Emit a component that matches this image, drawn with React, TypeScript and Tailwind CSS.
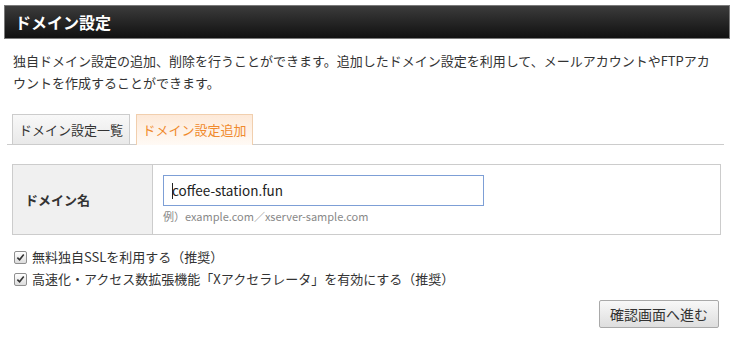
import React from 'react';

const FONT = { fontFamily: '"Noto Sans CJK JP", "Liberation Sans", sans-serif' };

const CheckMark: React.FC = () => (
  <span className="flex h-[13px] w-[13px] items-center justify-center rounded-[2px] border border-[#8f8f8f] bg-gradient-to-b from-white to-[#dcdcdc]">
    <svg viewBox="0 0 10 10" className="h-[9px] w-[9px]">
      <path d="M1.5 5.2 L4 7.6 L8.6 1.8" fill="none" stroke="#333" strokeWidth="1.8" />
    </svg>
  </span>
);

const Option: React.FC<{ label: string }> = ({ label }) => (
  <label className="flex h-[22px] items-center gap-[5px] pl-[14px] text-[13px] text-[#333]">
    <CheckMark />
    <span>{label}</span>
  </label>
);

export default function App() {
  return (
    <div className="h-[362px] w-[734px] bg-white pt-[5px]" style={FONT}>
      <header className="mx-[4px] flex h-[34px] items-center border border-[#7a7a7a] bg-gradient-to-b from-[#3c3c3c] to-[#111] pl-[10px]">
        <h1 className="text-[16px] font-bold text-white">ドメイン設定</h1>
      </header>

      <p className="mt-[11px] w-[734px] px-[13px] text-[13px] leading-[22px] text-[#333]">
        独自ドメイン設定の追加、削除を行うことができます。追加したドメイン設定を利用して、メールアカウントやFTPアカウントを作成することができます。
      </p>

      <nav className="mx-[7px] mt-[20px] flex h-[31px] w-[717px] items-end gap-[6px] border-b border-[#ccc] pl-[5px]">
        <div className="-mb-px flex h-[31px] w-[118px] items-center justify-center border border-[#ccc] bg-gradient-to-b from-[#f8f8f8] to-[#e9e9e9] text-[13px] text-[#333]">
          ドメイン設定一覧
        </div>
        <div className="-mb-px flex h-[31px] w-[117px] items-center justify-center border border-b-0 border-[#f1cfae] bg-gradient-to-b from-[#fde9d8] to-[#fffaf5] text-[13px] text-[#f08a2c]">
          ドメイン設定追加
        </div>
      </nav>

      <div className="mx-[12px] mt-[19px] flex h-[71px] w-[709px] border border-[#ccc]">
        <div className="flex w-[140px] items-center border-r border-[#ccc] bg-[#f0f0f0] pl-[12px] text-[13px] font-bold text-[#333]">
          ドメイン名
        </div>
        <div className="flex flex-col pl-[10px] pt-[10px]">
          <div className="flex h-[31px] w-[321px] items-center border border-[#7d9fd6] px-[8px] text-[13.5px] text-[#222]">
            <span className="mr-[-1px] h-[16px] w-px bg-[#222]" />
            coffee-station.fun
          </div>
          <span className="mt-[2px] text-[11px] text-[#888]">例）example.com／xserver-sample.com</span>
        </div>
      </div>

      <div className="mt-[11px] flex flex-col">
        <Option label="無料独自SSLを利用する（推奨）" />
        <Option label="高速化・アクセス数拡張機能「Xアクセラレータ」を有効にする（推奨）" />
      </div>

      <div className="mt-[10px] flex w-[719px] justify-end">
        <button className="h-[28px] w-[120px] rounded-[2px] border border-[#a9a9a9] bg-gradient-to-b from-[#f8f8f8] to-[#dedede] text-[14px] text-[#333]">
          確認画面へ進む
        </button>
      </div>
    </div>
  );
}
